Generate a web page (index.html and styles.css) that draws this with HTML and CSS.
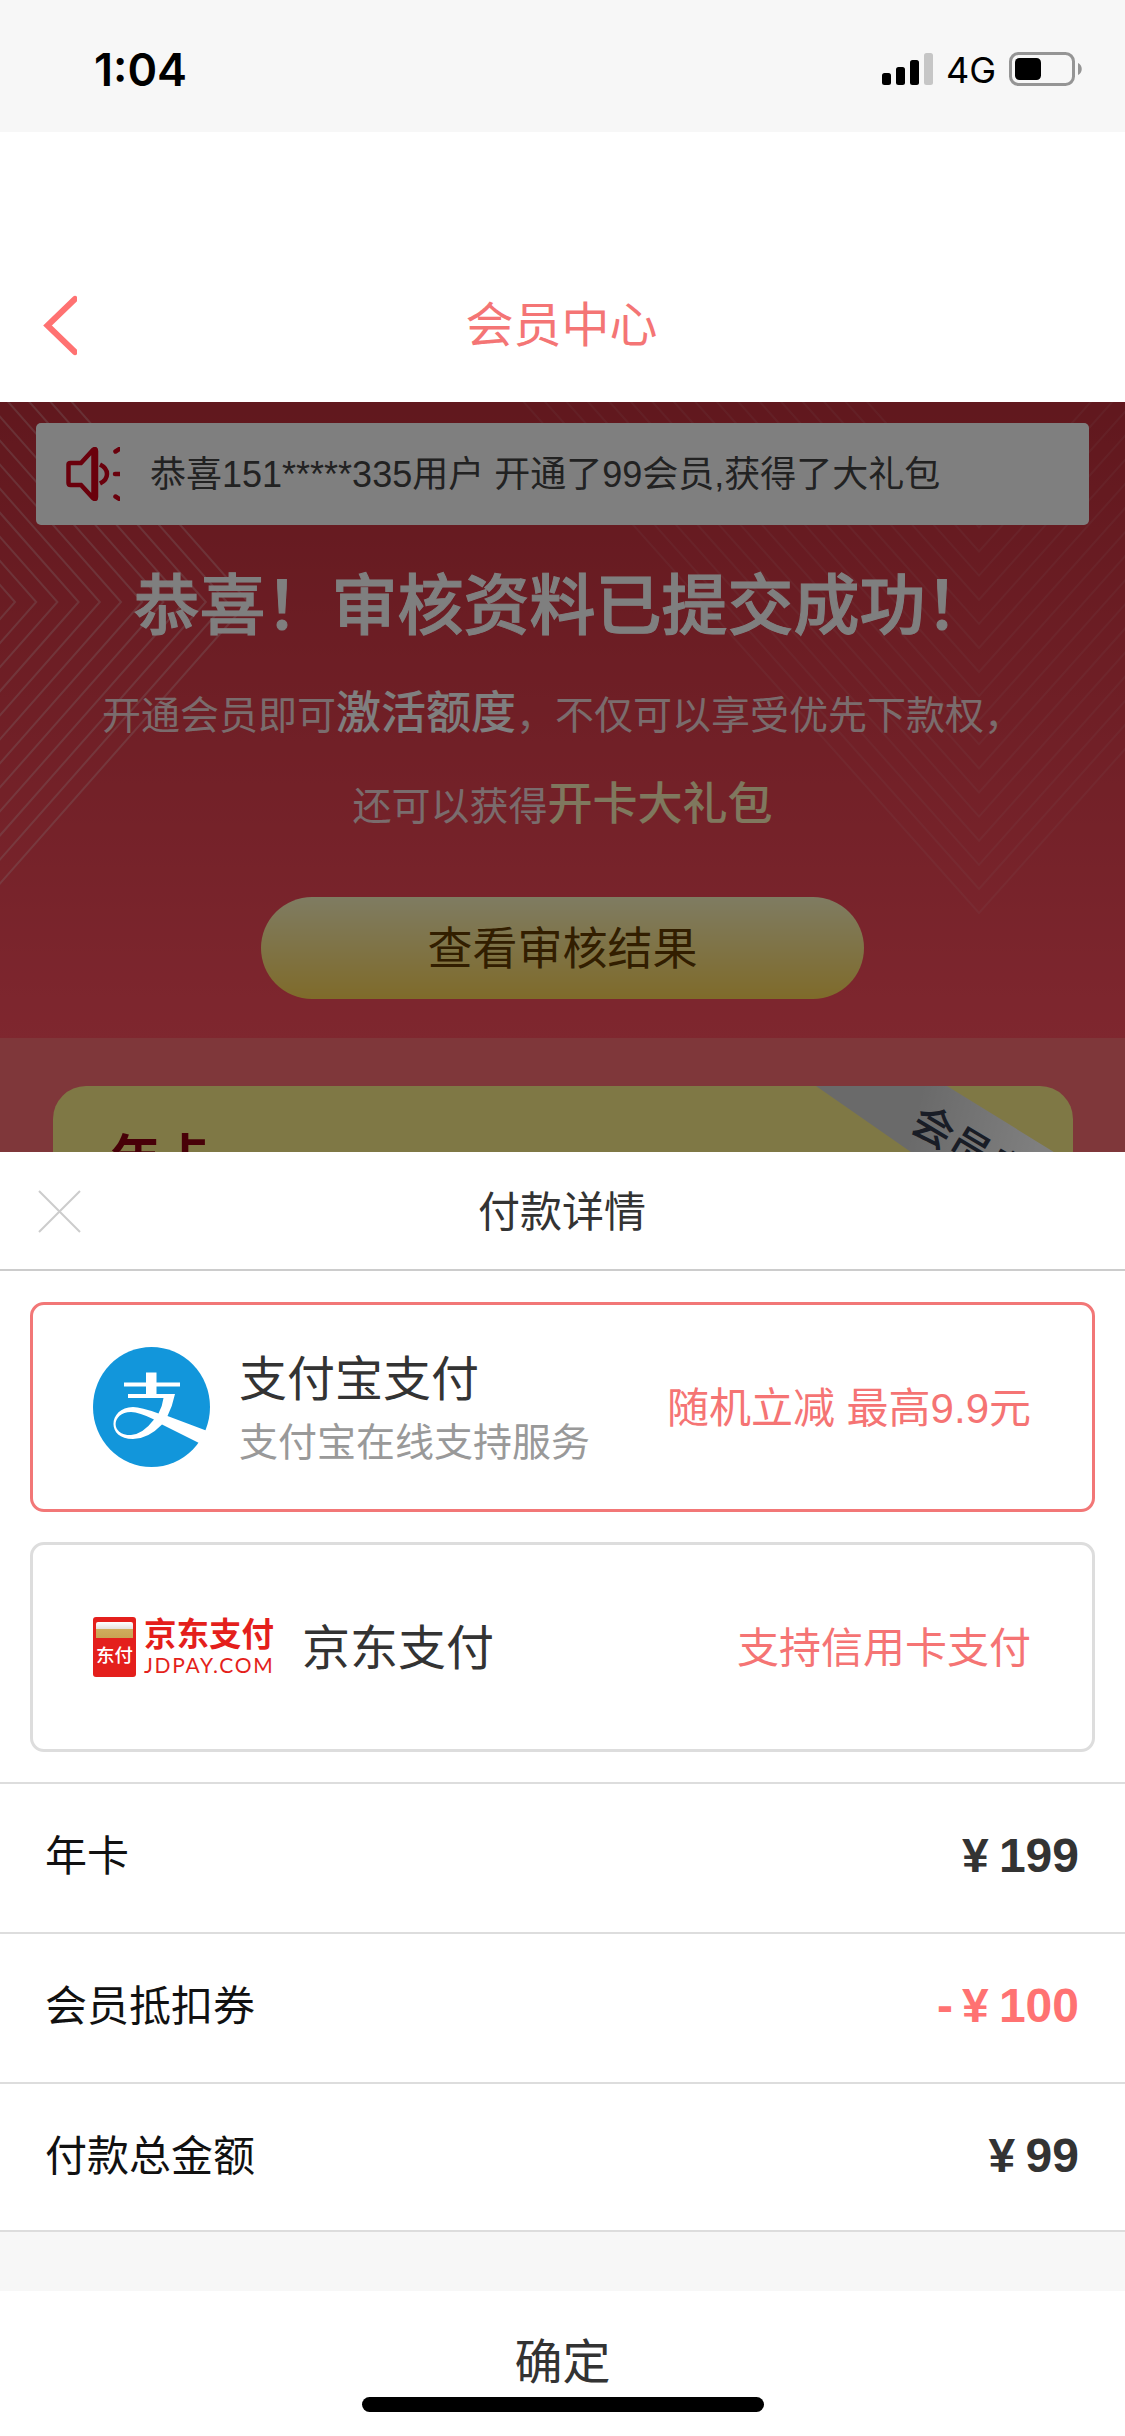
FILE: index.html
```html
<!DOCTYPE html>
<html lang="zh-CN">
<head>
<meta charset="utf-8">
<title>会员中心</title>
<link rel="stylesheet" href="styles.css">
</head>
<body>
<header class="status">
  <span class="clock">1:04</span>
  <div class="status-right">
    <svg class="signal" width="51" height="32" viewBox="0 0 51 32"><rect x="0" y="20" width="9" height="12" rx="2.5"/><rect x="14" y="14" width="9" height="18" rx="2.5"/><rect x="28" y="7" width="9" height="25" rx="2.5"/><rect x="42" y="0" width="9" height="32" rx="2.5" fill="#c6c6c6"/></svg>
    <span class="network">4G</span>
    <svg class="battery" width="73" height="34" viewBox="0 0 73 34"><rect x="1.5" y="1.5" width="63" height="31" rx="8" fill="none" stroke="#959595" stroke-width="3"/><rect x="6" y="6" width="26" height="22" rx="4.500"/><path d="M69 11c5 2 5 10 0 12z" fill="#959595"/></svg>
  </div>
</header>
<nav class="navbar">
  <svg class="back" width="36" height="62" viewBox="0 0 36 62"><path d="M34 4 6.500 30.500 34 57" fill="none" stroke="#ff7272" stroke-width="6" stroke-linecap="round"/></svg>
  <h1>会员中心</h1>
</nav>
<main class="page">
  <section class="hero">
    <svg class="stripes" width="1125" height="636" viewBox="0 0 1125 636" fill="none" stroke="#fff" stroke-width="2">
      <defs>
        <path id="arrow-right" d="M-485-550 0 0-485 550"/>
        <path id="arrow-down" d="M-490-550 0 0 490-550"/>
      </defs>
      <g opacity=".24">
        <use href="#arrow-right" x="15" y="200"/><use href="#arrow-right" x="36.200" y="200"/><use href="#arrow-right" x="57.400" y="200"/><use href="#arrow-right" x="78.600" y="200"/><use href="#arrow-right" x="99.800" y="200"/><use href="#arrow-right" x="121" y="200"/><use href="#arrow-right" x="142.200" y="200"/><use href="#arrow-right" x="163.400" y="200"/><use href="#arrow-right" x="184.600" y="200"/><use href="#arrow-right" x="205.800" y="200"/><use href="#arrow-right" x="227" y="200"/><use href="#arrow-right" x="248.200" y="200"/>
      </g>
      <g opacity=".08">
        <use href="#arrow-down" x="979" y="125.400"/><use href="#arrow-down" x="979" y="149.500"/><use href="#arrow-down" x="979" y="173.600"/><use href="#arrow-down" x="979" y="197.700"/><use href="#arrow-down" x="979" y="221.800"/><use href="#arrow-down" x="979" y="245.900"/><use href="#arrow-down" x="979" y="270"/><use href="#arrow-down" x="979" y="294.100"/><use href="#arrow-down" x="979" y="318.200"/><use href="#arrow-down" x="979" y="342.300"/><use href="#arrow-down" x="979" y="366.400"/><use href="#arrow-down" x="979" y="390.500"/><use href="#arrow-down" x="979" y="414.600"/><use href="#arrow-down" x="979" y="438.700"/><use href="#arrow-down" x="979" y="462.800"/><use href="#arrow-down" x="979" y="486.900"/><use href="#arrow-down" x="979" y="511"/>
      </g>
    </svg>
    <div class="notice">
      <svg width="54" height="54" viewBox="0 0 54 54" fill="none" stroke="#d40018" stroke-width="4.500"><path d="M2.500 17.500Q2.500 16 4.500 16H15L27 3Q30 .5 30 4V50Q30 53.500 27 51L15 38H4.500Q2.500 38 2.500 36ZM27.500 4V50M34 17.500Q41 21 41 27T34 36.500"/><path d="M49.500 4.500l4-2.500M49 27H54M49.500 49.500l4 2.500" stroke-linecap="round"/></svg>
      <span>恭喜151*****335用户 开通了99会员,获得了大礼包</span>
    </div>
    <h2>恭喜！审核资料已提交成功！</h2>
    <p class="lead">开通会员即可<b>激活额度</b>，不仅可以享受优先下款权，<br>还可以获得<b class="gold">开卡大礼包</b></p>
    <button class="result">查看审核结果</button>
  </section>
  <section class="plans">
    <article class="plan">
      <h3>年卡</h3>
      <div class="ribbon"><span>会员专享</span></div>
    </article>
  </section>
</main>
<section class="sheet">
  <header class="sheet-head">
    <svg class="close" width="43" height="43" viewBox="0 0 43 43"><path d="M1 1 42 42M42 1 1 42" stroke="#ccc" stroke-width="2"/></svg>
    <h2>付款详情</h2>
  </header>
  <div class="options">
    <div class="option selected">
      <svg class="alipay" width="117" height="120" viewBox="0 0 117 120"><ellipse cx="58.500" cy="60" rx="58.500" ry="60" fill="#1296db"/><path d="M53 25.500H63.500V35.500H87V39.500H63.500V47H82Q79.500 59 74.500 69L118 85.500 112 99 69 77.500Q55 92 40 92C12 92 16 60 40 60Q48 60 65.500 66.500 69.500 59 70.500 51H35V47H53V39.500H31V35.500H53ZM61 72.500Q46 65 38 65C19 65 16 88 38 88Q50 87 61 72.500Z" fill="#fff" fill-rule="evenodd"/></svg>
      <div class="names"><strong>支付宝支付</strong><small>支付宝在线支持服务</small></div>
      <span class="promo">随机立减 最高9.9元</span>
    </div>
    <div class="option">
      <div class="jd">
        <div class="jd-card"><i></i><span>东付</span></div>
        <div class="jd-words"><b>京东支付</b><span>JDPAY.COM</span></div>
      </div>
      <div class="names"><strong>京东支付</strong></div>
      <span class="promo">支持信用卡支付</span>
    </div>
  </div>
  <dl class="bill">
    <div><dt>年卡</dt><dd>¥ 199</dd></div>
    <div><dt>会员抵扣券</dt><dd class="minus"><span>-</span>¥ 100</dd></div>
    <div><dt>付款总金额</dt><dd>¥ 99</dd></div>
  </dl>
  <footer class="confirm"><button>确定</button><div class="home-bar"></div></footer>
</section>
</body>
</html>
```
FILE: styles.css
```css
* { box-sizing: border-box; margin: 0; padding: 0; }
body { width: 1125px; height: 2436px; overflow: hidden; display: flex; flex-direction: column; background: #fff; color: #333; font-family: "Liberation Sans", "Noto Sans CJK SC", sans-serif; }
svg { display: block; flex: none; }
button { border: 0; background: none; font: inherit; color: inherit; }
h1, h2, h3 { font-weight: 400; }

.status { height: 132px; padding: 6px 43px 0 94px; background: #f7f7f7; color: #000; display: flex; align-items: center; justify-content: space-between; font-family: Inter, sans-serif; }
.clock { font-size: 45px; font-weight: 600; }
.status-right { display: flex; align-items: center; }
.network { width: 76px; padding-left: 13px; font-size: 36px; line-height: 34px; padding-top: 2px; }

.navbar { height: 270px; padding: 117px 43px 0 41px; display: grid; grid-template-columns: 36px 1fr 36px; align-items: center; }
.navbar h1 { font-size: 48px; line-height: 60px; color: #f47575; text-align: center; }

.page { height: 750px; position: relative; overflow: hidden; flex: none; }
.page::after { content: ""; position: absolute; inset: 0; background: rgba(0, 0, 0, .5); }
.hero { height: 636px; padding-top: 21px; position: relative; display: flex; flex-direction: column; align-items: center; background: linear-gradient(#c2303c, #fe4e5e); color: #fff; }
.stripes { position: absolute; inset: 0; }
.hero > :not(.stripes) { position: relative; }
.notice { width: 1053px; height: 102px; padding: 0 30px; display: flex; align-items: center; gap: 30px; background: #fff; border-radius: 5px; color: #444; font-size: 36px; white-space: nowrap; }
.notice span { padding-bottom: 6px; }
.hero h2 { margin-top: 36px; font-size: 66px; line-height: 90px; font-weight: 500; -webkit-text-stroke: 1px #fff; }
.lead { margin-top: 18px; font-size: 39px; line-height: 89px; text-align: center; color: #f4d8da; white-space: nowrap; }
.lead b { font-size: 45px; font-weight: 500; color: #fff; }
.lead .gold { color: #fff0bc; }
.result { width: 603px; height: 102px; margin-top: 46px; padding-bottom: 6px; border-radius: 51px; background: linear-gradient(#fff8c4, #ffd655); color: #643c00; font-size: 45px; }
.plans { height: 114px; padding: 48px 52px 0 53px; background: #ff6e74; }
.plan { height: 300px; position: relative; overflow: hidden; padding: 39px 57px; border-radius: 33px; background: #fff08a; }
.plan h3 { font-size: 51px; line-height: 70px; font-weight: 700; color: #900010; }
.ribbon { position: absolute; left: 763px; top: 0; width: 257px; height: 160px; clip-path: polygon(0 0, 131px 0, 390px 160px, 230px 160px); background: linear-gradient(105deg, #d4d4d4 35%, #fff 80%); color: #333a4c; }
.ribbon span { position: absolute; left: 99px; top: 6px; font-size: 42px; line-height: 50px; font-weight: 500; white-space: nowrap; transform: rotate(31deg); transform-origin: 0 50%; }

.sheet { flex: none; height: 1284px; }
.sheet-head { height: 119px; padding: 2px 39px 0 38px; border-bottom: 2px solid #ccc; display: grid; grid-template-columns: 43px 1fr 43px; align-items: center; }
.sheet-head h2 { font-size: 42px; text-align: center; padding-bottom: 6px; }
.options { height: 511px; padding: 31px 30px 0; display: flex; flex-direction: column; gap: 30px; }
.option { height: 210px; border: 3px solid #ddd; border-radius: 14px; padding: 0 61px 0 60px; display: flex; align-items: center; gap: 29px; }
.option.selected { border-color: #f27777; }
.names { display: flex; flex-direction: column; padding-top: 7px; }
.names strong { font-size: 48px; line-height: 64px; font-weight: 400; }
.names small { font-size: 39px; line-height: 62px; color: #999; }
.option:not(.selected) .names { padding-top: 4px; }
.promo { margin-left: auto; padding-bottom: 5px; font-size: 42px; color: #f57474; white-space: nowrap; }
.jd { display: flex; gap: 8px; }
.jd-card { width: 43px; height: 60px; border-radius: 3px; padding: 5px 3px 0; background: #e41f1c; color: #fff; }
.jd-card i { display: block; height: 16px; border-radius: 2px 2px 0 0; background: linear-gradient(#fff, #e4dfdc 45%, #d0ad5c 46%, #c9a353); }
.jd-card span { display: block; margin-top: 7px; font-size: 18.500px; line-height: 22px; font-weight: 500; white-space: nowrap; }
.jd-words { width: 129px; color: #e41f1c; display: flex; flex-direction: column; white-space: nowrap; }
.jd-words b { font-size: 32.500px; line-height: 37px; font-weight: 700; }
.jd-words span { font-family: Lato, sans-serif; font-size: 21px; line-height: 22px; letter-spacing: 1.700px; }

.bill { border-bottom: 2px solid #ddd; height: 450px; }
.bill div { height: 150px; padding: 0 46px 6px 45px; border-top: 2px solid #ddd; display: flex; align-items: center; justify-content: space-between; }
.bill dt { font-size: 42px; color: #111; padding-bottom: 5px; }
.bill dd { font-size: 48px; font-weight: 700; word-spacing: -3px; }
.bill .minus { color: #ff7272; }
.minus span { margin-right: 9px; }
.confirm { height: 204px; border-top: 59px solid #f7f7f7; display: flex; flex-direction: column; align-items: center; }
.confirm button { margin-top: 36px; margin-bottom: -2px; font-size: 48px; line-height: 72px; }
.home-bar { width: 402px; height: 15px; border-radius: 8px; background: #000; }
```
